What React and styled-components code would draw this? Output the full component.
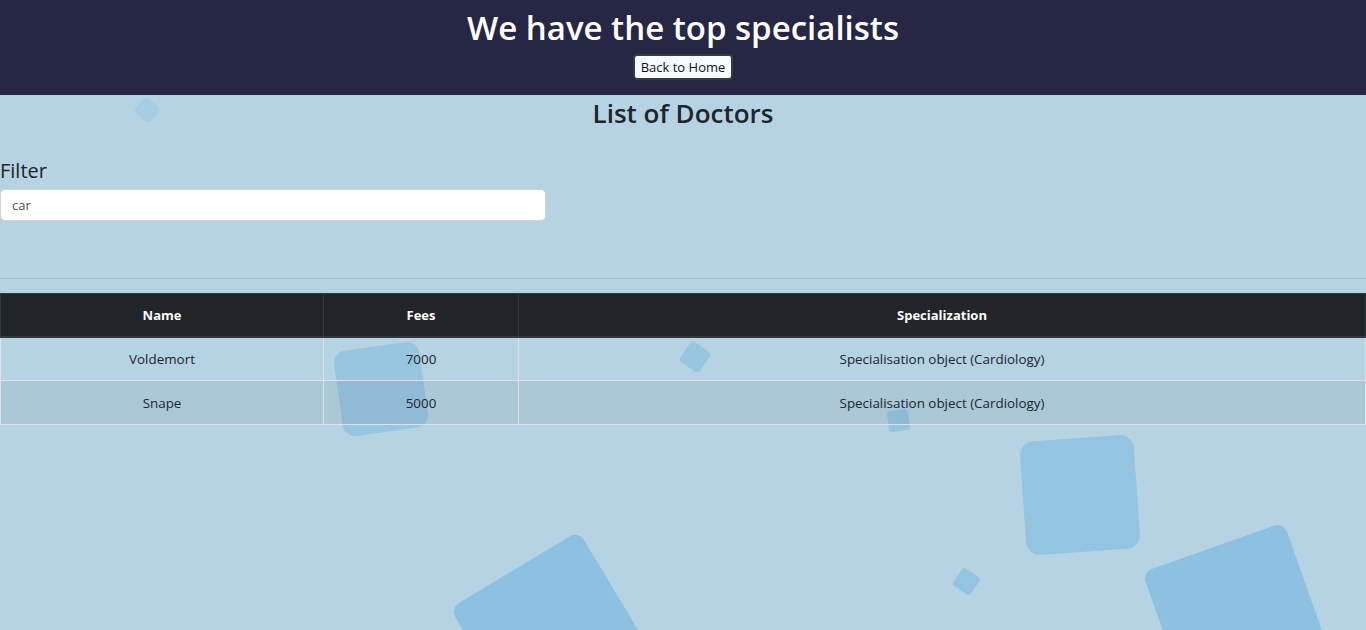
import React from 'react';
import styled, { createGlobalStyle } from 'styled-components';

const Global = createGlobalStyle`
  html, body { margin: 0; padding: 0; }
  body {
    font-family: "Open Sans", "Noto Sans", sans-serif;
    color: #212529;
    background: #b5d3e3;
    overflow: hidden;
  }
  * { box-sizing: border-box; }
`;

const Page = styled.div`
  min-height: 630px;
  display: flex;
  flex-direction: column;
`;

const Header = styled.header`
  background: #262645;
  height: 95px;
  display: flex;
  flex-direction: column;
  align-items: center;
  padding-top: 6px;
`;

const Heading = styled.h1`
  margin: 0;
  color: #fff;
  font-size: 33px;
  font-weight: 600;
  line-height: 44px;
`;

const HomeButton = styled.button`
  margin-top: 4px;
  height: 26px;
  padding: 0 6px;
  background: #f5fbff;
  border: 2px solid #3a3a3a;
  border-radius: 4px;
  font-family: "Open Sans", sans-serif;
  font-size: 13px;
  color: #111;
`;

const Main = styled.main`
  position: relative;
  flex: 1;
  background: #b5d3e3;
  overflow: hidden;
  min-height: 535px;
`;

const Squares = styled.div`
  position: absolute;
  inset: 0;
  z-index: 0;
  pointer-events: none;
`;

const Square = styled.span`
  position: absolute;
  left: ${(p) => p.$x - p.$s / 2}px;
  top: ${(p) => p.$y - p.$s / 2}px;
  width: ${(p) => p.$s}px;
  height: ${(p) => p.$s}px;
  border-radius: ${(p) => p.$r}px;
  background: ${(p) => p.$c};
  transform: rotate(${(p) => p.$a}deg);
`;

const Content = styled.div`
  position: relative;
  z-index: 1;
  display: flex;
  flex-direction: column;
`;

const Title = styled.h2`
  margin: 0;
  text-align: center;
  font-size: 26px;
  font-weight: 600;
  line-height: 36px;
  color: #212529;
`;

const FilterBox = styled.div`
  margin-top: 26px;
  display: flex;
  flex-direction: column;
  gap: 4px;
`;

const FilterLabel = styled.label`
  font-size: 20px;
  line-height: 28px;
  font-weight: 500;
  color: #212529;
`;

const FilterInput = styled.input`
  width: 546px;
  height: 32px;
  padding: 0 11px;
  border: 1px solid #ced4da;
  border-radius: 5px;
  background: #fff;
  font-family: "Open Sans", sans-serif;
  font-size: 13px;
  color: #495057;
  outline: none;
`;

const Rule = styled.hr`
  margin: 57px 0 14px;
  border: 0;
  border-top: 1px solid #9fbccb;
  height: 0;
`;

const Table = styled.table`
  width: 100%;
  border-collapse: collapse;
  font-size: 13.4px;
  text-align: center;
`;

const HeadCell = styled.th`
  height: 43px;
  padding: 0;
  background: #212529;
  color: #fff;
  font-size: 13px;
  font-weight: 700;
  border: 1px solid #32383e;
  border-bottom: 2px solid #32383e;
  width: ${(p) => p.$w || 'auto'};
`;

const Row = styled.tr`
  background: ${(p) => (p.$striped ? 'rgba(0,0,0,0.05)' : 'transparent')};
`;

const Cell = styled.td`
  height: 44px;
  padding: 0;
  border: 1px solid #dee2e6;
  color: #212529;
`;

const squares = [
  { x: 147, y: 15, s: 20, a: 40, r: 5, c: '#a6cde3' },
  { x: 381, y: 294, s: 86, a: -8, r: 12, c: '#97c6e1' },
  { x: 695, y: 262, s: 24, a: 35, r: 4, c: '#97c6e1' },
  { x: 898, y: 325, s: 21, a: -8, r: 3, c: '#95c5e1' },
  { x: 1080, y: 400, s: 114, a: -4, r: 14, c: '#93c4e1' },
  { x: 966, y: 486, s: 21, a: 34, r: 3, c: '#93c4e1' },
  { x: 1238, y: 523, s: 150, a: -19.5, r: 10, c: '#8dc1e1' },
  { x: 553, y: 539, s: 150, a: -31, r: 10, c: '#8cc1e1' },
];

const doctors = [
  { name: 'Voldemort', fees: 7000, spec: 'Specialisation object (Cardiology)' },
  { name: 'Snape', fees: 5000, spec: 'Specialisation object (Cardiology)' },
];

export default function App() {
  return (
    <Page>
      <Global />
      <Header>
        <Heading>We have the top specialists</Heading>
        <HomeButton>Back to Home</HomeButton>
      </Header>
      <Main>
        <Squares>
          {squares.map((q, i) => (
            <Square key={i} $x={q.x} $y={q.y} $s={q.s} $a={q.a} $r={q.r} $c={q.c} />
          ))}
        </Squares>
        <Content>
          <Title>List of Doctors</Title>
          <FilterBox>
            <FilterLabel htmlFor="filter">Filter</FilterLabel>
            <FilterInput id="filter" defaultValue="car" />
          </FilterBox>
          <Rule />
          <Table>
            <thead>
              <tr>
                <HeadCell $w="323px">Name</HeadCell>
                <HeadCell $w="195px">Fees</HeadCell>
                <HeadCell>Specialization</HeadCell>
              </tr>
            </thead>
            <tbody>
              {doctors.map((d, i) => (
                <Row key={d.name} $striped={i % 2 === 1}>
                  <Cell>{d.name}</Cell>
                  <Cell>{d.fees}</Cell>
                  <Cell>{d.spec}</Cell>
                </Row>
              ))}
            </tbody>
          </Table>
        </Content>
      </Main>
    </Page>
  );
}
